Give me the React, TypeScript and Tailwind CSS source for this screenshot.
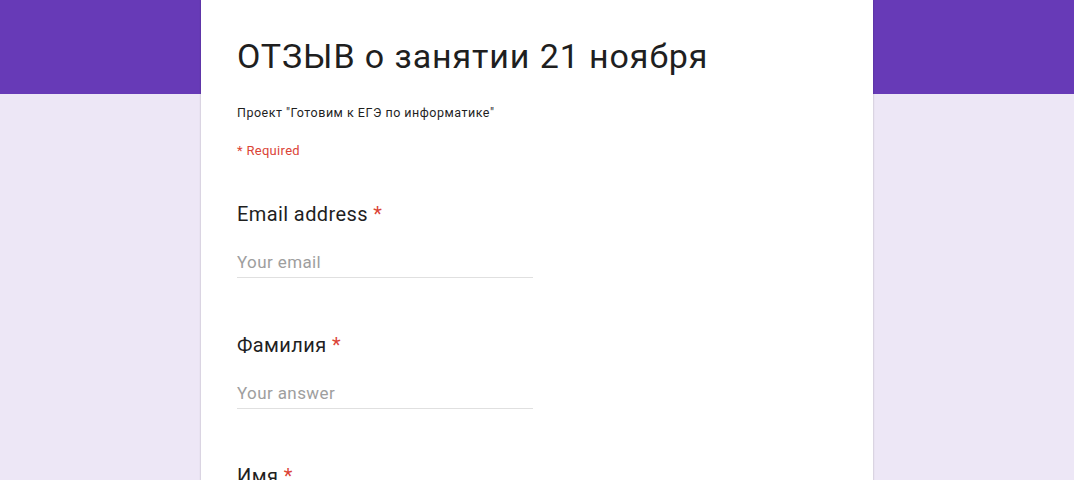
const questions = [
  { label: 'Email address', placeholder: 'Your email' },
  { label: 'Фамилия', placeholder: 'Your answer' },
  { label: 'Имя', placeholder: 'Your answer' },
];

export default function App() {
  return (
    <div
      className="min-h-[480px] bg-[linear-gradient(to_bottom,#673ab7_0,#673ab7_94px,#ede7f6_94px)] font-['Roboto',sans-serif] text-[#1f1f1f]"
    >
      <div className="mx-auto w-[672px] bg-white px-9 pt-9 pb-10 shadow-[0_0_2px_rgba(0,0,0,0.25)]">
        <h1 className="text-[34px] leading-[40px] font-normal tracking-[0.9px]">ОТЗЫВ о занятии 21 ноября</h1>
        <p className="mt-[29px] text-[12.5px] leading-4 tracking-[0.5px]">Проект "Готовим к ЕГЭ по информатике"</p>
        <p className="mt-[22px] text-[13px] leading-4 tracking-[0.3px] text-[#db4437]">* Required</p>

        <div className="mt-[43px] flex flex-col gap-[55px]">
          {questions.map((q) => (
            <div key={q.label}>
              <div className="text-[20px] leading-6 tracking-[0.4px]">
                {q.label} <span className="text-[#db4437]">*</span>
              </div>
              <div className="mt-[24px] w-[296px] border-b border-[#e0e0e0] pb-[3px] text-[17px] leading-6 tracking-[0.4px] text-[#9e9e9e]">
                {q.placeholder}
              </div>
            </div>
          ))}
        </div>
      </div>
    </div>
  );
}
